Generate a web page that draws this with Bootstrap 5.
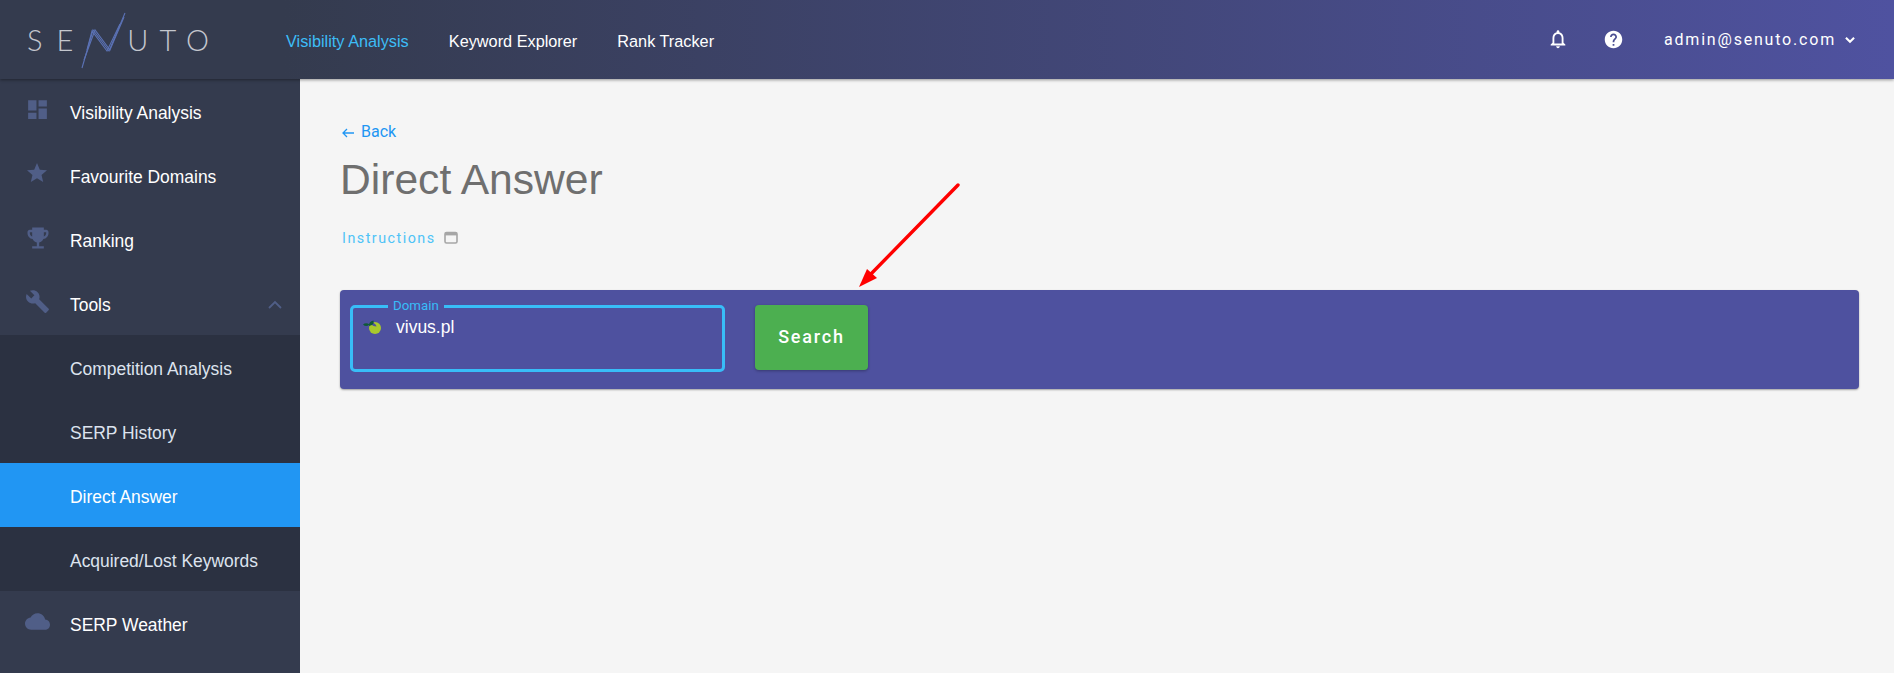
<!DOCTYPE html>
<html lang="en">
<head>
  <meta charset="UTF-8" />
  <meta name="viewport" content="width=device-width, initial-scale=1.0" />
  <title>Direct Answer</title>
  <link href="https://cdn.jsdelivr.net/npm/bootstrap@5.3.0/dist/css/bootstrap.min.css" rel="stylesheet">
  <style>
    html, body {
      height: 100%;
      overflow: hidden;
    }
    body {
      background-color: #f5f5f5;
      font-family: "Liberation Sans", Arial, sans-serif;
    }
    .top-bar {
      height: 79px;
      padding: 0;
      background: linear-gradient(90deg, #343b4e 0%, #343b4e 15%, #4f52a0 100%);
      box-shadow: 0 1px 3px rgba(0, 0, 0, .4);
      position: relative;
      z-index: 2;
    }
    .brand-box {
      width: 286px;
      height: 79px;
      padding-left: 27px;
      color: #c4c7ce;
      font-family: "Lato", sans-serif;
      font-weight: 300;
      font-size: 29px;
      line-height: 79px;
    }
    .brand-box .brand-a { letter-spacing: 14px; }
    .brand-box .brand-b { letter-spacing: 11px; }
    .brand-box svg { margin-left: -8px; flex: none; }
    .top-link {
      color: #fff;
      font-size: 16.3px;
      margin-right: 40px;
      padding-top: 3px;
      text-decoration: none;
    }
    .top-link.is-on { color: #3dbdf7; }
    .user-name {
      color: #fff;
      font-family: Roboto, sans-serif;
      font-size: 16px;
      letter-spacing: 1.8px;
    }
    .tool-ico { margin-top: -2px; }
    .ico-help { margin: 0 40px 0 34px; }
    .ico-caret { margin: 0 37px 0 7px; }
    .side-col {
      width: 300px;
      flex: none;
      height: calc(100vh - 79px);
      background: #343b4e;
    }
    .side-item {
      height: 64px;
      color: #fff;
      font-size: 17.45px;
      text-decoration: none;
      position: relative;
      padding: 4px 0 0 70px;
    }
    .side-item svg.side-ico {
      position: absolute;
      left: 25px;
      top: 18px;
      fill: #505e87;
    }
    .side-item svg.ico-cup { left: 23.5px; top: 16.5px; }
    .side-item svg.ico-fold { margin-right: 16px; }
    .side-sub { background: #2b3141; }
    .side-sub .side-item { color: #dde3ee; }
    .side-sub .side-item.is-on { background: #2196f3; color: #fff; }
    .main-col {
      padding: 41px 35px 0 40px;
      position: relative;
    }
    .back-link {
      color: #2196f3;
      font-family: Roboto, sans-serif;
      font-size: 16px;
      line-height: 18px;
      text-decoration: none;
    }
    .back-link svg { margin: 0 7px 0 2px; vertical-align: -1px; }
    .page-title {
      color: #6f6f6f;
      font-size: 42.6px;
      line-height: 48px;
      font-weight: 400;
      margin: 11px 0 0;
    }
    .help-line {
      color: #4fc3f7;
      font-family: Roboto, sans-serif;
      font-size: 14.3px;
      letter-spacing: 1.5px;
      margin: 25px 0 0 2px;
      line-height: 20px;
    }
    .search-panel {
      height: 99px;
      margin-top: 42px;
      padding: 8px 0 0 10px;
      background: #4e519f;
      border-radius: 4px;
      box-shadow: 0 1px 2px rgba(0, 0, 0, .35);
    }
    .domain-field {
      width: 375px;
      height: 74px;
      margin: 0;
      padding: 0 10px;
      border: 3px solid #38bdf8;
      border-radius: 5px;
      min-width: 0;
    }
    .domain-field legend {
      float: none;
      width: auto;
      margin: 0 0 0 25px;
      padding: 0 5px;
      color: #38bdf8;
      font-family: Roboto, sans-serif;
      font-size: 13.3px;
      line-height: 16px;
    }
    .domain-value {
      color: #fff;
      font-size: 17.5px;
      line-height: 20px;
      margin-top: 3px;
    }
    .domain-value span { margin-left: 7px; }
    .domain-value svg { flex: none; }
    .search-btn {
      width: 113px;
      height: 65px;
      margin: 7px 0 0 30px;
      padding: 0 0 2px;
      background: #4caf50;
      border: 0;
      border-radius: 4px;
      color: #fff;
      font-family: Roboto, sans-serif;
      font-weight: 500;
      font-size: 18px;
      letter-spacing: 1.8px;
      box-shadow: 0 1px 3px rgba(0, 0, 0, .3);
    }
    .note-arrow {
      position: absolute;
      left: -300px;
      top: -79px;
      pointer-events: none;
    }
  </style>
</head>
<body>
  <nav class="navbar top-bar flex-nowrap">
    <div class="d-flex align-items-center brand-box">
      <span class="brand-a">SE</span>
      <svg width="48" height="58" viewBox="76 11 48 58" fill="none" stroke="#5b72b5" stroke-width="1.1">
        <polyline points="79,68 90,30 106,51 122,13" />
        <polyline points="81,60 92,30 107,50 121,17" />
        <polyline points="84,50 89,31 104,51 117,24" />
      </svg>
      <span class="brand-b">UTO</span>
    </div>
    <div class="d-flex align-items-center flex-grow-1">
      <a class="top-link is-on" href="#">Visibility Analysis</a>
      <a class="top-link" href="#">Keyword Explorer</a>
      <a class="top-link" href="#">Rank Tracker</a>
    </div>
    <div class="d-flex align-items-center">
      <svg class="tool-ico" width="22" height="22" viewBox="0 0 24 24" fill="#fff"><path d="M12 22c1.1 0 2-.9 2-2h-4c0 1.1.9 2 2 2zm6-6v-5c0-3.07-1.63-5.64-4.5-6.32V4c0-.83-.67-1.5-1.5-1.5s-1.5.67-1.5 1.5v.68C7.64 5.36 6 7.92 6 11v5l-2 2v1h16v-1l-2-2zm-2 1H8v-6c0-2.48 1.51-4.5 4-4.5s4 2.02 4 4.5v6z"/></svg>
      <svg class="tool-ico ico-help" width="21" height="21" viewBox="0 0 24 24" fill="#fff"><path d="M12 2C6.48 2 2 6.48 2 12s4.48 10 10 10 10-4.48 10-10S17.52 2 12 2zm1 17h-2v-2h2v2zm2.07-7.75l-.9.92C13.45 12.9 13 13.5 13 15h-2v-.5c0-1.1.45-2.1 1.17-2.83l1.24-1.26c.37-.36.59-.86.59-1.41 0-1.1-.9-2-2-2s-2 .9-2 2H8c0-2.21 1.79-4 4-4s4 1.79 4 4c0 .88-.36 1.68-.93 2.25z"/></svg>
      <span class="user-name">admin@senuto.com</span>
      <svg class="ico-caret" width="14" height="14" viewBox="0 0 24 24" fill="none" stroke="#fff" stroke-width="3.5"><polyline points="5,8 12,15 19,8"/></svg>
    </div>
  </nav>

  <div class="d-flex">
    <aside class="side-col">
      <a class="side-item d-flex align-items-center" href="#">
        <svg class="side-ico" width="25" height="25" viewBox="0 0 24 24"><path d="M3 13h8V3H3v10zm0 8h8v-6H3v6zm10 0h8V11h-8v10zm0-18v6h8V3h-8z"/></svg>
        Visibility Analysis
      </a>
      <a class="side-item d-flex align-items-center" href="#">
        <svg class="side-ico" width="24" height="24" viewBox="0 0 24 24"><path d="M12 17.27L18.18 21l-1.64-7.03L22 9.24l-7.19-.61L12 2 9.19 8.63 2 9.24l5.46 4.73L5.82 21z"/></svg>
        Favourite Domains
      </a>
      <a class="side-item d-flex align-items-center" href="#">
        <svg class="side-ico ico-cup" width="28" height="28" viewBox="0 0 24 24"><path d="M19 5h-2V3H7v2H5c-1.1 0-2 .9-2 2v1c0 2.55 1.92 4.63 4.39 4.94.63 1.5 1.98 2.63 3.61 2.96V19H7v2h10v-2h-4v-3.1c1.63-.33 2.98-1.46 3.61-2.96C19.08 12.63 21 10.55 21 8V7c0-1.1-.9-2-2-2zM5 8V7h2v3.82C5.84 10.4 5 9.3 5 8zm14 0c0 1.3-.84 2.4-2 2.82V7h2v1z"/></svg>
        Ranking
      </a>
      <a class="side-item d-flex align-items-center justify-content-between" href="#">
        Tools
        <svg class="ico-fold" width="18" height="18" viewBox="0 0 24 24" fill="none" stroke="#505e87" stroke-width="2.4"><polyline points="4,16 12,8 20,16"/></svg>
        <svg class="side-ico" width="25" height="25" viewBox="0 0 24 24"><path d="M22.7 19l-9.1-9.1c.9-2.3.4-5-1.5-6.9-2-2-5-2.4-7.4-1.3L9 6 6 9 1.6 4.7C.4 7.1.9 10.1 2.9 12.1c1.9 1.9 4.6 2.4 6.9 1.5l9.1 9.1c.4.4 1 .4 1.4 0l2.3-2.3c.5-.4.5-1.1.1-1.4z"/></svg>
      </a>
      <div class="side-sub">
        <a class="side-item d-flex align-items-center" href="#">Competition Analysis</a>
        <a class="side-item d-flex align-items-center" href="#">SERP History</a>
        <a class="side-item d-flex align-items-center is-on" href="#">Direct Answer</a>
        <a class="side-item d-flex align-items-center" href="#">Acquired/Lost Keywords</a>
      </div>
      <a class="side-item d-flex align-items-center" href="#">
        <svg class="side-ico" width="25" height="25" viewBox="0 0 24 24"><path d="M19.35 10.04C18.67 6.59 15.64 4 12 4 9.11 4 6.6 5.64 5.35 8.04 2.34 8.36 0 10.91 0 14c0 3.31 2.69 6 6 6h13c2.76 0 5-2.24 5-5 0-2.64-2.05-4.78-4.65-4.96z"/></svg>
        SERP Weather
      </a>
    </aside>

    <main class="main-col flex-grow-1">
      <a class="back-link" href="#"><svg width="12" height="10" viewBox="0 0 12 10" fill="none" stroke="#2196f3" stroke-width="1.3"><path d="M12 5H1M5 1 1 5l4 4"/></svg>Back</a>
      <h1 class="page-title">Direct Answer</h1>
      <div class="help-line d-flex align-items-center">
        Instructions
        <svg class="ms-2" width="14" height="14" viewBox="0 0 14 14" fill="none"><rect x="1" y="1.5" width="12" height="10.5" rx="1.5" stroke="#a6a6a6" stroke-width="1.6"/><rect x="1" y="2" width="12" height="2.4" fill="#a6a6a6"/></svg>
      </div>
      <div class="search-panel d-flex align-items-start">
        <fieldset class="domain-field">
          <legend>Domain</legend>
          <div class="domain-value d-flex align-items-center">
            <svg width="18" height="14" viewBox="0 0 18 14" class="me-2"><circle cx="12" cy="8" r="6" fill="#a8c82d"/><path d="M7.5 3 Q9.5 6.5 13.5 6.5 Q12 2 7.5 3Z" fill="#4e519f"/><path d="M0 4.5 Q3 2 6.5 4.5 Q3 7.5 0 4.5Z M6 6 Q5.5 1.5 10.5 .5 Q11.5 5 6 6Z" fill="#0f5a38"/></svg>
            <span>vivus.pl</span>
          </div>
        </fieldset>
        <button class="search-btn" type="button">Search</button>
      </div>
      <svg class="note-arrow" width="1000" height="400">
        <line x1="958" y1="185" x2="868" y2="277" stroke="#f00" stroke-width="3.4" stroke-linecap="round"/>
        <polygon points="859,287 867,269 877,278" fill="#f00"/>
      </svg>
    </main>
  </div>
</body>
</html>
